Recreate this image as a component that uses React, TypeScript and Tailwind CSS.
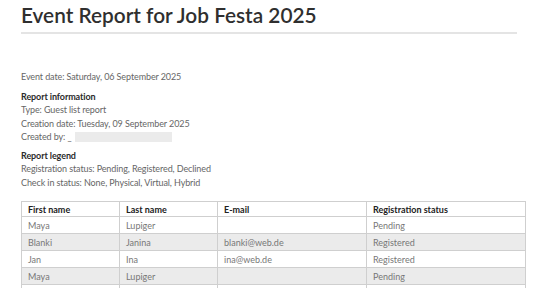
const rows = [
  { first: "Maya", last: "Lupiger", email: "", status: "Pending" },
  { first: "Blanki", last: "Janina", email: "blanki@web.de", status: "Registered" },
  { first: "Jan", last: "Ina", email: "ina@web.de", status: "Registered" },
  { first: "Maya", last: "Lupiger", email: "", status: "Pending" },
  { first: "", last: "", email: "", status: "" },
];

export default function App() {
  return (
    <div className="min-h-screen bg-white px-[21px] pt-[1px] font-['Lato','Open_Sans',sans-serif] text-[#555]">
      <h1 className="border-b-2 border-[#e4e4e4] pb-[3px] text-[20.8px] font-semibold leading-[28px] text-[#2f2f2f]">
        Event Report for Job Festa 2025
      </h1>

      <p className="mt-[36px] text-[9px] leading-[13.5px] tracking-[-0.1px] text-[#666]">
        Event date: Saturday, 06 September 2025
      </p>

      <div className="mt-[6px] text-[9px] leading-[13.5px] tracking-[-0.1px] text-[#666]">
        <div className="font-bold text-[#2b2b2b]">Report information</div>
        <div>Type: Guest list report</div>
        <div>Creation date: Tuesday, 09 September 2025</div>
        <div className="flex items-center">
          <span>Created by: _</span>
          <span className="ml-[3px] inline-block h-[10px] w-[97px] bg-[#ebebeb]" />
        </div>
      </div>

      <div className="mt-[5px] text-[9px] leading-[13.5px] tracking-[-0.1px] text-[#666]">
        <div className="font-bold text-[#2b2b2b]">Report legend</div>
        <div>Registration status: Pending, Registered, Declined</div>
        <div>Check in status: None, Physical, Virtual, Hybrid</div>
      </div>

      <table className="mt-[12px] w-[504px] table-fixed border-collapse text-[9px]">
        <colgroup>
          <col className="w-[98px]" />
          <col className="w-[98px]" />
          <col className="w-[149px]" />
          <col className="w-[159px]" />
        </colgroup>
        <thead>
          <tr className="h-[15px]">
            {["First name", "Last name", "E-mail", "Registration status"].map((h) => (
              <th
                key={h}
                className="border border-[#cfcfcf] px-[6px] py-0 text-left font-bold leading-[13px] text-[#222]"
              >
                {h}
              </th>
            ))}
          </tr>
        </thead>
        <tbody>
          {rows.map((r, i) => (
            <tr key={i} className={`h-[17px] ${i % 2 === 1 ? "bg-[#ebebeb]" : "bg-white"}`}>
              <td className="border border-[#cfcfcf] px-[6px] py-0 leading-[15px] text-[#777]">{r.first}</td>
              <td className="border border-[#cfcfcf] px-[6px] py-0 leading-[15px] text-[#777]">{r.last}</td>
              <td className="border border-[#cfcfcf] px-[6px] py-0 leading-[15px] text-[#777]">{r.email}</td>
              <td className="border border-[#cfcfcf] px-[6px] py-0 leading-[15px] text-[#777]">{r.status}</td>
            </tr>
          ))}
        </tbody>
      </table>
    </div>
  );
}
